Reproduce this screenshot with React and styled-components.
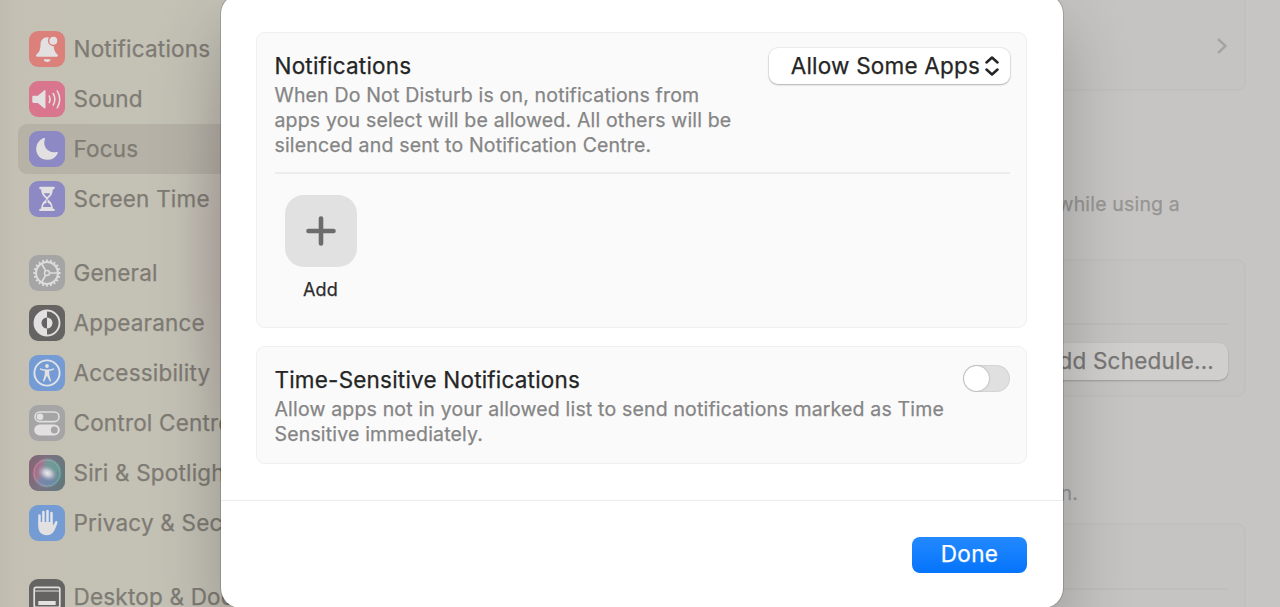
import React, { useState } from "react";
import styled, { createGlobalStyle } from "styled-components";

const sections = [
  [
    { label: "Notifications", icon: "bell", color: "#dc807c" },
    { label: "Sound", icon: "sound", color: "#d9758c" },
    { label: "Focus", icon: "moon", color: "#8c89c4" },
    { label: "Screen Time", icon: "hourglass", color: "#8c89c4" },
  ],
  [
    { label: "General", icon: "gear", color: "#a6a5a6" },
    { label: "Appearance", icon: "appearance", color: "#656463" },
    { label: "Accessibility", icon: "access", color: "#749bd3" },
    { label: "Control Centre", icon: "toggles", color: "#a6a5a6" },
    { label: "Siri & Spotlight", icon: "siri", color: "#6b6872" },
    { label: "Privacy & Security", icon: "hand", color: "#749bd3" },
  ],
  [{ label: "Desktop & Dock", icon: "dock", color: "#656463" }],
];

const teeth = Array.from({ length: 20 }, (_, i) => i * 18);

const glyphs = {
  bell: (
    <>
      <path d="M18 6.2c-4 .3-6.300 3-6.500 7.200-.2 5.400-1 7.400-3.600 9.600-1.300 1.100-1.100 2.800.8 2.800h18.600c1.900 0 2.100-1.700.8-2.800-1.900-1.600-3.100-3.600-3.400-8.600-.2-4.500-2-7.900-6.700-8.200z" />
      <circle cx="24.300" cy="9.800" r="4.700" stroke="#dc807c" strokeWidth="1.400" />
      <path d="M14.600 28.200h7c-.4 1.700-1.700 2.700-3.500 2.700s-3.100-1-3.500-2.700z" />
    </>
  ),
  sound: (
    <>
      <path d="M4.500 14.700h4.300l6.300-5.300c.7-.6 1.400-.3 1.400.6v16.600c0 .9-.7 1.200-1.400.6l-6.300-5.300H4.500c-.8 0-1.200-.4-1.200-1.200v-4.800c0-.8.4-1.200 1.200-1.200z" />
      <g fill="none" stroke="#e4e0e0" strokeWidth="1.500" strokeLinecap="round">
        <path d="M20.200 15c1.200 2.200 1.200 4.400 0 6.600" />
        <path d="M24.200 12.500c2.200 3.800 2.200 7.800 0 11.600" />
        <path d="M28.200 9.800c3.300 5.400 3.300 11.600 0 17" />
      </g>
    </>
  ),
  moon: (
    <path d="M14.800 7.100c.8-.4 1.500.1 1.100 1-2.700 7.400 3.100 14.700 11.700 12.900 1-.2 1.500.5 1 1.400A11.100 11.100 0 0 1 18.300 28.800C11.700 28.800 7.200 24 7.200 18c0-4.800 3-9 7.600-10.900z" />
  ),
  hourglass: (
    <>
      <path d="M11.500 5.800h13c.8 0 1.300.5 1.300 1.200s-.5 1.200-1.300 1.200h-.6c-.2 4.100-1.500 6.700-4.100 8.500-.9.700-.9 1.900 0 2.600 2.600 1.800 3.900 4.400 4.100 8.400h.6c.8 0 1.300.5 1.300 1.200s-.5 1.200-1.300 1.200h-13c-.8 0-1.300-.5-1.300-1.200s.5-1.200 1.300-1.200h.6c.2-4 1.500-6.600 4.100-8.400.9-.7.9-1.900 0-2.600-2.600-1.800-3.900-4.400-4.100-8.500h-.6c-.8 0-1.300-.5-1.300-1.200s.5-1.200 1.300-1.200z" />
      <path
        d="M14.800 12.200h6.400c-.6 1.300-1.400 2.300-2.500 3.200-.4.400-1 .4-1.400 0-1.100-.9-1.900-1.900-2.500-3.200zM17.500 18.500h1v3.300c2.100.7 3.300 2 3.600 4.200h-8.200c.3-2.200 1.500-3.500 3.600-4.200z"
        fill="#8c89c4"
      />
    </>
  ),
  gear: (
    <g fill="none" stroke="#dddcdc">
      <circle cx="18" cy="18" r="11" strokeWidth="1.900" />
      {teeth.map((a) => (
        <path key={a} d="M18 4.400v2.200" strokeWidth="1.900" transform={`rotate(${a} 18 18)`} />
      ))}
      <circle cx="18" cy="18" r="2.500" strokeWidth="1.500" />
      <path d="M20.500 18H29M16.700 15.800 12.500 8.500M16.700 20.200l-4.200 7.300" strokeWidth="1.700" />
    </g>
  ),
  appearance: (
    <>
      <circle cx="18" cy="18" r="12.500" fill="none" stroke="#dfdedd" strokeWidth="1.900" />
      <path d="M18 5.500a12.500 12.500 0 0 0 0 25v-7a5.500 5.500 0 0 1 0-11z" />
      <path d="M18 12.500a5.500 5.500 0 0 1 0 11z" />
    </>
  ),
  access: (
    <>
      <circle cx="18" cy="18" r="12.600" fill="none" stroke="#e0e3e8" strokeWidth="1.900" />
      <circle cx="18" cy="11" r="1.900" />
      <path d="M11.800 13.400c2 .7 4 1 6.200 1s4.200-.3 6.200-1c1-.3 1.500 1 .5 1.400-1.400.6-3 .9-4.500 1.100-.3 3.300.8 6.500 1.800 9.500.3 1-1 1.500-1.400.5L18 20.800l-2.600 5.100c-.4 1-1.700.5-1.400-.5 1-3 2.100-6.200 1.800-9.500-1.500-.2-3.100-.5-4.500-1.100-1-.4-.5-1.700.5-1.400z" />
    </>
  ),
  toggles: (
    <>
      <rect x="6" y="7" width="24" height="9.600" rx="4.800" fill="none" stroke="#dfdede" strokeWidth="1.600" />
      <circle cx="11" cy="11.800" r="3.300" />
      <rect x="5.200" y="19.400" width="25.600" height="11" rx="5.500" />
      <circle cx="25.300" cy="24.900" r="3.500" fill="#a6a5a6" />
    </>
  ),
  siri: (
    <>
      <defs>
        <linearGradient id="siriBase" x1="0" y1=".3" x2="1" y2=".6">
          <stop offset="0" stopColor="#b4607c" />
          <stop offset=".45" stopColor="#918a9e" />
          <stop offset="1" stopColor="#56928f" />
        </linearGradient>
        <radialGradient id="siriGlow">
          <stop offset="0" stopColor="#f0edf0" />
          <stop offset=".4" stopColor="#ceced8" stopOpacity=".85" />
          <stop offset="1" stopColor="#9090b0" stopOpacity="0" />
        </radialGradient>
      </defs>
      <rect width="36" height="36" fill="url(#siriBase)" opacity=".35" />
      <circle cx="18" cy="18" r="14.500" fill="url(#siriBase)" />
      <path d="M18 4c8 0 13 5 13 11-5 3-9 4-13 3-3-3-4-9 0-14z" fill="#68a094" opacity=".7" />
      <path d="M8 28c3-6 6-9 11-9 4 1 7 4 8 8-5 5-13 6-19 1z" fill="#6d86ae" opacity=".7" />
      <ellipse cx="18.500" cy="18" rx="11" ry="8" fill="url(#siriGlow)" transform="rotate(25 18 18)" />
      <circle cx="18" cy="18" r="13" fill="none" stroke="#a7b4ba" strokeWidth=".8" opacity=".7" />
    </>
  ),
  hand: (
    <>
      <g fill="none" stroke="#e2e4e8" strokeWidth="2.500" strokeLinecap="round">
        <path d="M10.500 10.500v9M14.400 7v12M18.500 5.900v12M22.500 8v12" />
      </g>
      <path d="M9.250 17h14.500v3.600c1.100-1 1.700-2.300 2.300-3.700.6-1.300 2.700-1 2.400.7-.5 2.500-1.800 5.700-3.400 8.300-1.800 2.900-4.300 4.400-7.400 4.400-5.300 0-8.400-3.700-8.400-9z" />
    </>
  ),
  dock: (
    <>
      <rect x="5.200" y="8.300" width="25.600" height="20" rx="1.800" fill="none" stroke="#dfdedd" strokeWidth="1.700" />
      <path d="M5 12h26" stroke="#dfdedd" strokeWidth="1.100" />
      <rect x="9.300" y="22" width="17.400" height="4" rx=".6" />
    </>
  ),
};

function App() {
  const [active, setActive] = useState("Focus");
  const [sensitive, setSensitive] = useState(false);

  return (
    <Window>
      <GlobalStyle />
      <Sidebar>
        {sections.map((items, i) => (
          <Section key={i}>
            {items.map((item) => (
              <Item
                key={item.label}
                $active={item.label === active}
                onClick={() => setActive(item.label)}
              >
                <Tile $color={item.color}>
                  <svg width="36" height="36" viewBox="0 0 36 36" fill="#e2e0e0">
                    {glyphs[item.icon]}
                  </svg>
                </Tile>
                {item.label}
              </Item>
            ))}
          </Section>
        ))}
      </Sidebar>
      <Main>
        <FocusCard>
          <svg width="12" height="18" viewBox="0 0 12 18" fill="none" stroke="#a5a4a2" strokeWidth="2.400">
            <path d="M2 2l7.500 7L2 16" />
          </svg>
        </FocusCard>
        <Note $top={101} $right={66}>while using a</Note>
        <ScheduleCard>
          <CardLine />
          <ScheduleButton>Add Schedule...</ScheduleButton>
        </ScheduleCard>
        <Note $top={84} $right={168}>on.</Note>
        <StatusCard>
          <CardLine />
        </StatusCard>
      </Main>

      <Sheet>
        <SheetBody>
          <Panel $height={296}>
            <PanelRow $height={141}>
              <TextBlock $width={470}>
                <Title>Notifications</Title>
                <Description>
                  When Do Not Disturb is on, notifications from
                  <br />
                  apps you select will be allowed. All others will be
                  <br />
                  silenced and sent to Notification Centre.
                </Description>
              </TextBlock>
              <Popup>
                Allow Some Apps
                <svg width="14" height="20" viewBox="0 0 14 20" fill="none" stroke="#252525" strokeWidth="2.500" strokeLinecap="round" strokeLinejoin="round">
                  <path d="M1.500 6.500 7 1.500l5.500 5M1.500 13.500l5.500 5 5.500-5" />
                </svg>
              </Popup>
            </PanelRow>
            <AddApp>
              <AddTile>
                <svg width="30" height="30" viewBox="0 0 30 30" stroke="#6c6c6c" strokeWidth="4.600" strokeLinecap="round">
                  <path d="M15 2.500v25M2.500 15h25" />
                </svg>
              </AddTile>
              Add
            </AddApp>
          </Panel>
          <Panel $height={118}>
            <PanelRow>
              <TextBlock $width={680}>
                <Title>Time-Sensitive Notifications</Title>
                <Description>
                  Allow apps not in your allowed list to send notifications marked as Time
                  <br />
                  Sensitive immediately.
                </Description>
              </TextBlock>
              <Switch $on={sensitive} onClick={() => setSensitive(!sensitive)}>
                <Knob />
              </Switch>
            </PanelRow>
          </Panel>
        </SheetBody>
        <SheetFooter>
          <DoneButton>Done</DoneButton>
        </SheetFooter>
      </Sheet>
    </Window>
  );
}

export default App;

const GlobalStyle = createGlobalStyle`
  * {
    box-sizing: border-box;
  }
  body {
    margin: 0;
    overflow: hidden;
    font-family: Inter, "Liberation Sans", sans-serif;
    -webkit-text-stroke: 0.25px currentColor;
  }
`;

const Window = styled.div`
  position: relative;
  display: flex;
  width: 1280px;
  height: 607px;
  overflow: hidden;
  background: #c6c5c3;
`;

const Sidebar = styled.div`
  width: 400px;
  flex-shrink: 0;
  padding: 23.5px 0 0 18px;
  display: flex;
  flex-direction: column;
  gap: 24px;
  background: radial-gradient(ellipse 60px 200px at 240px 255px, rgba(180, 155, 158, 0.45), transparent),
    linear-gradient(to right, #c0bdb0, #c4c1b4 18px, #c4c1b6 220px);
`;

const Section = styled.div`
  display: flex;
  flex-direction: column;
`;

const Item = styled.div`
  height: 50px;
  flex-shrink: 0;
  padding-left: 10.5px;
  display: flex;
  align-items: center;
  gap: 9px;
  border-radius: 9px;
  color: #7e7b74;
  font-size: 22.5px;
  letter-spacing: 0.2px;
  white-space: nowrap;
  background: ${(props) => (props.$active ? "rgba(80, 76, 66, 0.12)" : "transparent")};
`;

const Tile = styled.div`
  width: 36px;
  height: 36px;
  border-radius: 9px;
  overflow: hidden;
  background: ${(props) => props.$color};

  svg {
    display: block;
  }
`;

const Main = styled.div`
  flex: 1;
  display: flex;
  flex-direction: column;
  padding-right: 34px;
`;

const Card = styled.div`
  flex-shrink: 0;
  border: 2px solid #c1c0be;
  border-radius: 9px;
  background: #c5c4c2;
`;

const FocusCard = styled(Card)`
  height: 91px;
  border-top: none;
  border-top-right-radius: 0;
  display: flex;
  justify-content: flex-end;
  align-items: center;
  padding: 2px 16px 0 0;
`;

const ScheduleCard = styled(Card)`
  height: 138px;
  padding: 62px 16px 0;
  margin-top: 42px;
  display: flex;
  flex-direction: column;
  align-items: flex-end;
`;

const StatusCard = styled(Card)`
  height: 120px;
  margin-top: 17px;
  padding: 63px 16px 0;
`;

const CardLine = styled.div`
  width: 100%;
  height: 2px;
  flex-shrink: 0;
  background: #bfbebc;
`;

const Note = styled.div`
  margin-top: ${(props) => props.$top}px;
  padding-right: ${(props) => props.$right}px;
  line-height: 25px;
  font-size: 19.5px;
  letter-spacing: 0.17px;
  text-align: right;
  color: #969593;
`;

const ScheduleButton = styled.div`
  margin-top: 18px;
  height: 37px;
  width: 210px;
  padding: 0 14px 3px 0;
  display: flex;
  align-items: center;
  justify-content: flex-end;
  border-radius: 9px;
  background: #d0cfcd;
  box-shadow: 0 1px 2px rgba(0, 0, 0, 0.22);
  color: #777674;
  font-size: 22.5px;
  letter-spacing: 0.2px;
`;

const Sheet = styled.div`
  position: absolute;
  top: -6px;
  left: 221px;
  width: 842px;
  height: 614px;
  border-radius: 20px;
  background: #fff;
  box-shadow: 0 0 0 1px rgba(0, 0, 0, 0.15), 0 32px 70px rgba(0, 0, 0, 0.24);
  display: flex;
  flex-direction: column;
`;

const SheetBody = styled.div`
  height: 506px;
  padding: 38px 36px 0 35px;
  display: flex;
  flex-direction: column;
  gap: 18px;
`;

const Panel = styled.div`
  height: ${(props) => props.$height}px;
  padding: 0 16px 0 17.5px;
  border: 1.5px solid #f0f0f0;
  border-radius: 9px;
  background: #fafafa;
`;

const PanelRow = styled.div`
  height: ${(props) => (props.$height ? `${props.$height}px` : "auto")};
  border-bottom: ${(props) => (props.$height ? "2px solid #ededed" : "none")};
  display: flex;
  justify-content: space-between;
  align-items: flex-start;
`;

const TextBlock = styled.div`
  width: ${(props) => props.$width}px;
  padding-top: 16px;
  white-space: nowrap;
`;

const Title = styled.div`
  color: #252525;
  font-size: 22.5px;
  line-height: 33px;
  letter-spacing: 0.2px;
`;

const Description = styled.div`
  margin-top: 1px;
  color: #858585;
  font-size: 19.5px;
  line-height: 25px;
  letter-spacing: 0.17px;
`;

const Popup = styled.div`
  width: 241px;
  height: 36px;
  margin-top: 15px;
  padding: 0 11px 2px 0;
  display: flex;
  align-items: center;
  justify-content: flex-end;
  gap: 5px;
  border-radius: 9px;
  background: #fff;
  box-shadow: 0 0 0 1px rgba(0, 0, 0, 0.05), 0 1px 2px rgba(0, 0, 0, 0.26);
  color: #252525;
  font-size: 22.5px;
  letter-spacing: 0.2px;
  white-space: nowrap;

  svg {
    position: relative;
    top: 1px;
  }
`;

const AddApp = styled.div`
  width: 72px;
  margin: 21px 0 0 10px;
  display: flex;
  flex-direction: column;
  align-items: center;
  gap: 11px;
  color: #2c2c2c;
  font-size: 18px;
  line-height: 24px;
  letter-spacing: 0.2px;
`;

const AddTile = styled.div`
  width: 72px;
  height: 72px;
  border-radius: 19px;
  background: #e1e1e1;
  display: flex;
  align-items: center;
  justify-content: center;
`;

const Switch = styled.div`
  width: 47px;
  height: 27px;
  margin-top: 18px;
  padding: 1px;
  border-radius: 14px;
  display: flex;
  align-items: center;
  justify-content: ${(props) => (props.$on ? "flex-end" : "flex-start")};
  background: ${(props) => (props.$on ? "#0a7aff" : "#e0e0e0")};
  box-shadow: inset 0 0 1px 1px rgba(0, 0, 0, 0.06);
`;

const Knob = styled.div`
  width: 25px;
  height: 25px;
  border-radius: 50%;
  background: #fff;
  box-shadow: 0 0 2px rgba(0, 0, 0, 0.35);
`;

const SheetFooter = styled.div`
  flex: 1;
  border-top: 1.5px solid #ececec;
  padding: 36px 36px 0 0;
  display: flex;
  justify-content: flex-end;
  align-items: flex-start;
`;

const DoneButton = styled.div`
  width: 115px;
  height: 36px;
  padding-bottom: 3px;
  display: flex;
  align-items: center;
  justify-content: center;
  border-radius: 8px;
  background: linear-gradient(#2389ff, #0574fb);
  color: #fff;
  font-size: 22.5px;
  letter-spacing: 0.3px;
`;
